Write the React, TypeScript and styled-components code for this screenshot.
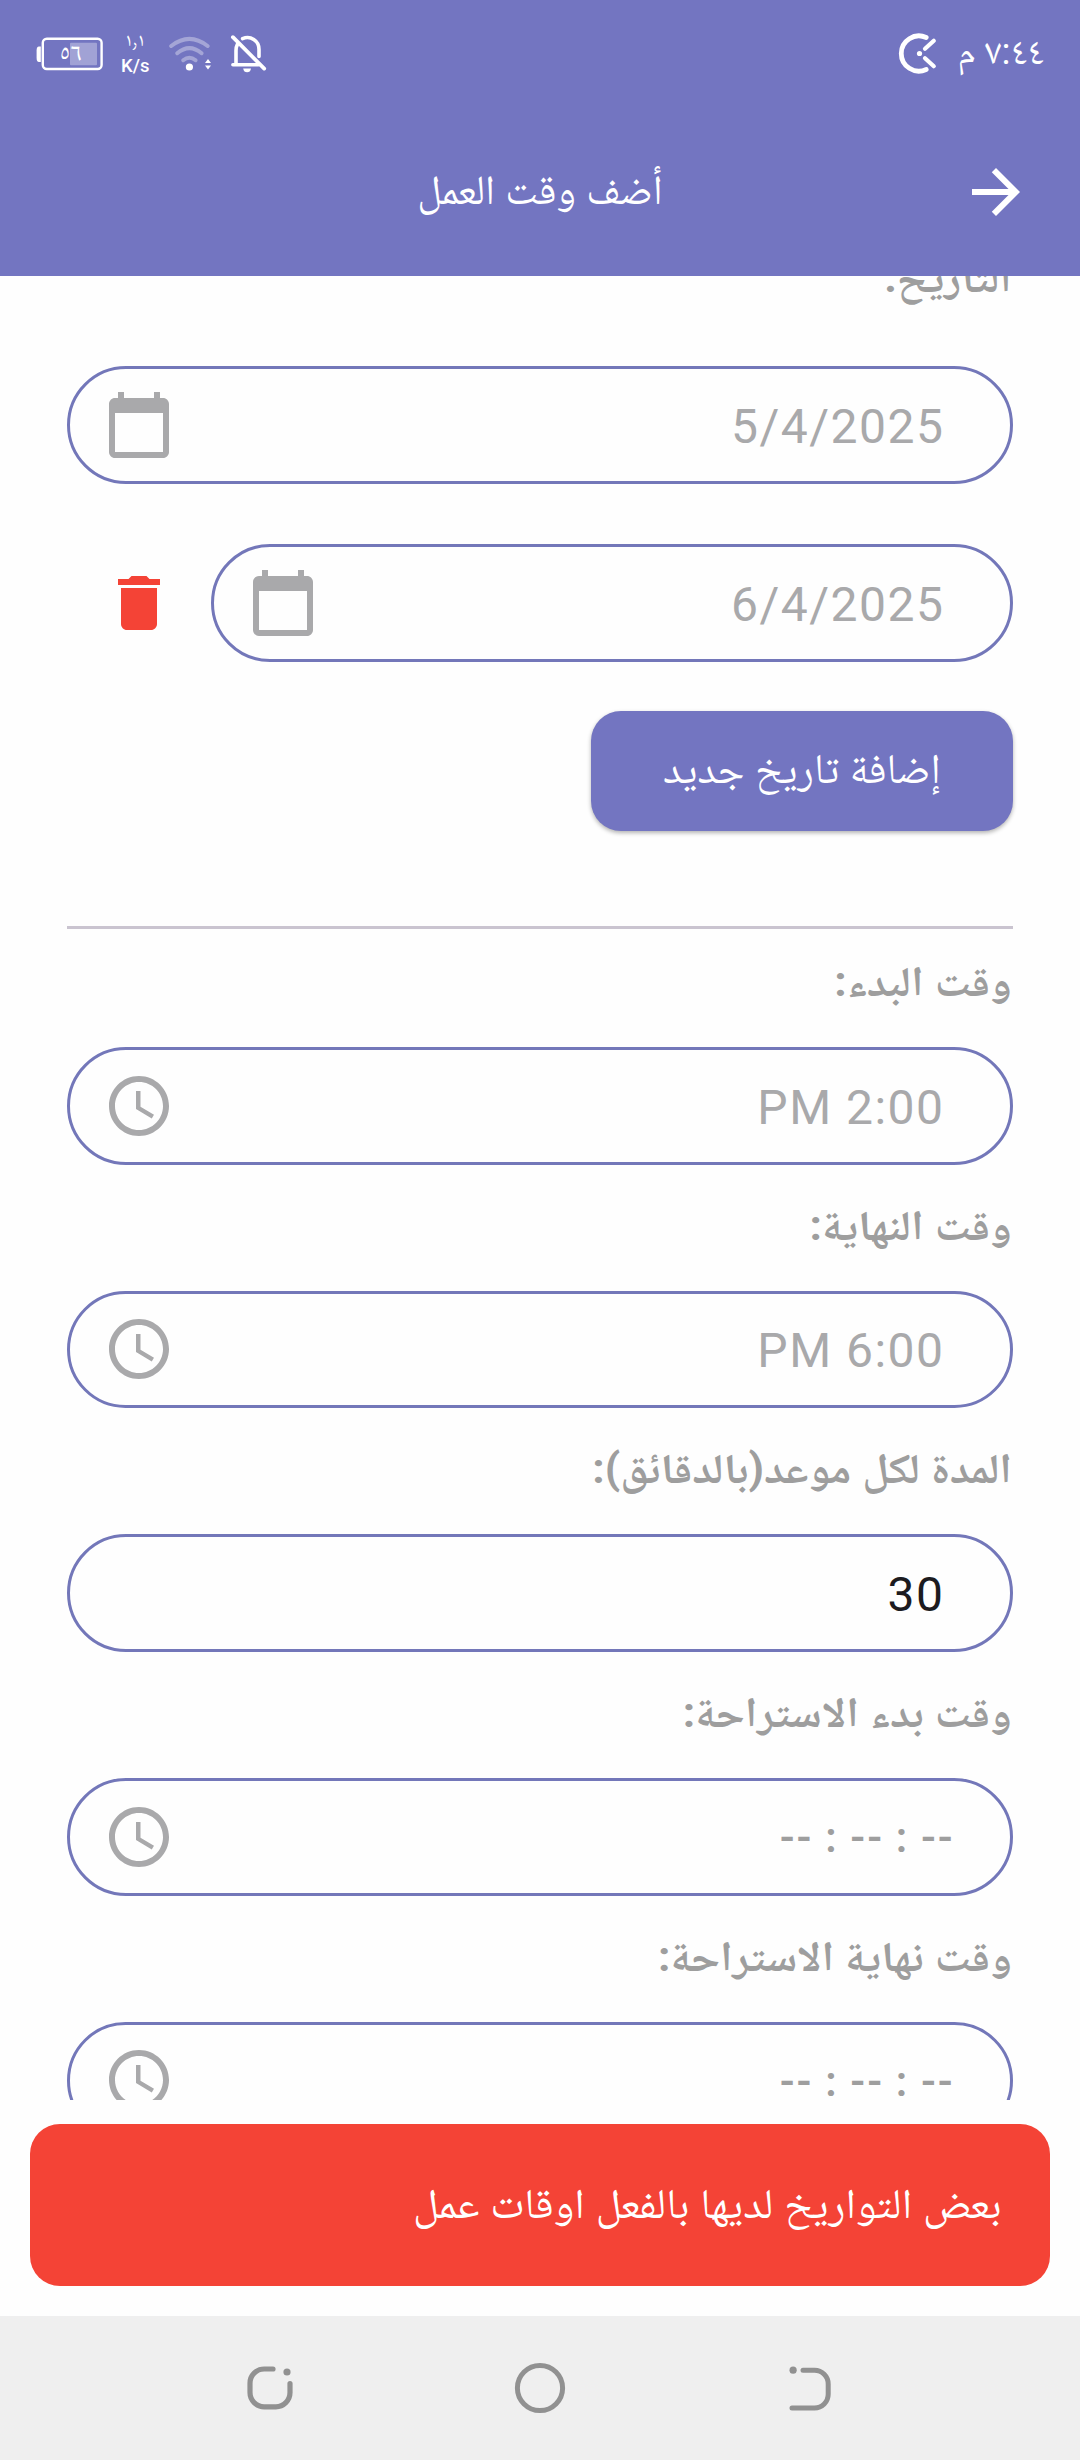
import React from "react";
import styled, { createGlobalStyle } from "styled-components";

const color = {
  primary: "#7375c1",
  outline: "#7377b9",
  danger: "#f44336",
  surface: "#fefefe",
  divider: "#cac4d0",
  label: "#9e9e9e",
  hint: "#a9a9ab",
  ink: "#1c1b1f",
  nav: "#efefef",
  navIcon: "#919191",
};

const fontStack = 'Roboto, "Noto Naskh Arabic", "Noto Naskh Arabic UI", sans-serif';

const GlobalStyle = createGlobalStyle`
  *, *::before, *::after { box-sizing: border-box; }
  body { margin: 0; background: ${color.surface}; }
  svg { display: block; flex: none; }
`;

const Screen = styled.div`
  display: flex;
  flex-direction: column;
  width: 1080px;
  height: 2460px;
  overflow: hidden;
  direction: rtl;
  background: ${color.surface};
  font-family: ${fontStack};
`;

/* ---------- Header ---------- */

const Header = styled.header`
  flex: none;
  height: 276px;
  background: ${color.primary};
  color: #fff;
`;

const StatusBar = styled.div`
  display: flex;
  align-items: center;
  justify-content: space-between;
  height: 108px;
  padding: 0 36px;
`;

const StatusGroup = styled.div<{ $gap: number }>`
  display: flex;
  align-items: center;
  gap: ${(p) => p.$gap}px;
`;

const Time = styled.span`
  padding-bottom: 6px;
  font-size: 37.2px;
  line-height: 60px;
  white-space: nowrap;
`;

const NetSpeed = styled.div`
  display: flex;
  flex-direction: column;
  align-items: center;
  width: 30px;
  margin-left: -1.5px;
  font-size: 18.5px;
  font-weight: 500;
  line-height: 24px;
  direction: ltr;
`;

const SpeedValue = styled.span`
  margin-bottom: 3px;
  font-weight: 400;
  line-height: 21px;
`;

const AppBar = styled.div`
  display: grid;
  grid-template-columns: 1fr auto 1fr;
  align-items: center;
  height: 168px;
  padding: 0 48px;
`;

const Title = styled.h1`
  margin: 0;
  padding-bottom: 4px;
  font-size: 41.5px;
  font-weight: 400;
  line-height: 80px;
`;

/* ---------- Form ---------- */

const ScrollArea = styled.main`
  flex: none;
  height: 1824px;
  overflow: hidden;
`;

const Form = styled.div`
  display: flex;
  flex-direction: column;
  margin-top: -60px;
  padding: 0 67px;
`;

const Label = styled.label<{ $height?: number; $line?: number }>`
  flex: none;
  height: ${(p) => p.$height ?? 126}px;
  padding-right: 1px;
  color: ${color.label};
  font-size: 42px;
  font-weight: 660;
  line-height: ${(p) => p.$line ?? 121}px;
  transform: scaleX(1.057);
  transform-origin: right;
  white-space: nowrap;
`;

const DateRow = styled.div<{ $spaced?: boolean }>`
  display: flex;
  flex: none;
  align-items: center;
  gap: 36px;
  margin-top: ${(p) => (p.$spaced ? 60.67 : 0)}px;
`;

const Field = styled.div`
  display: flex;
  flex: 1 0 auto;
  align-items: center;
  justify-content: space-between;
  height: 117.67px;
  padding: 0 65.5px 0 33px;
  border: 3px solid ${color.outline};
  border-radius: 59px;
`;

const FieldValue = styled.span<{ $tone?: "hint" | "ink" }>`
  padding-top: 4px;
  color: ${(p) => (p.$tone === "ink" ? color.ink : color.hint)};
  direction: ltr;
  font-size: 48px;
  letter-spacing: 1.5px;
  line-height: 72px;
`;

const Placeholder = styled.span`
  margin-right: -10px;
  padding-top: 3px;
  color: ${color.label};
  direction: ltr;
  font-size: 42px;
  font-weight: 600;
  letter-spacing: 1.5px;
  line-height: 72px;
`;

const DeleteButton = styled.button`
  flex: none;
  margin: 0 0 0 36px;
  padding: 0;
  border: 0;
  background: none;
`;

const AddButton = styled.button`
  flex: none;
  align-self: flex-start;
  width: 422.5px;
  height: 120.67px;
  margin: 48.67px 0 94.33px;
  padding: 0 0 3px;
  border: 0;
  border-radius: 30px;
  background: ${color.primary};
  box-shadow: 0 2px 4px rgba(0, 0, 0, 0.3);
  color: #fff;
  font-family: inherit;
  font-size: 42.3px;
  line-height: 80px;
`;

const Divider = styled.hr`
  flex: none;
  width: 100%;
  height: 3px;
  margin: 0;
  border: 0;
  background: ${color.divider};
`;

/* ---------- Snackbar and navigation ---------- */

const SnackbarHost = styled.div`
  flex: none;
  height: 216px;
  padding: 24px 30px 30px;
`;

const Snackbar = styled.div`
  display: flex;
  align-items: center;
  height: 162px;
  padding: 0 48px 3px;
  border-radius: 30px;
  background: ${color.danger};
  color: #fff;
  font-size: 42px;
  line-height: 80px;
`;

const Message = styled.span`
  transform: scaleX(1.046);
  transform-origin: right;
`;

const NavBar = styled.nav`
  display: grid;
  flex: none;
  grid-template-columns: repeat(3, 1fr);
  place-items: center;
  height: 144px;
  padding: 0 135px;
  background: ${color.nav};
`;

/* ---------- Icons ---------- */

const MaterialIcon = ({ d, fill }: { d: string; fill: string }) => (
  <svg width="72" height="72" viewBox="0 0 24 24" fill={fill}>
    <path d={d} />
  </svg>
);

const CalendarIcon = () => (
  <MaterialIcon
    fill={color.hint}
    d="M20 3h-1V1h-2v2H7V1H5v2H4c-1.1 0-2 .9-2 2v16c0 1.1.9 2 2 2h16c1.1 0 2-.9 2-2V5c0-1.1-.9-2-2-2zm0 18H4V8h16v13z"
  />
);

const ClockIcon = () => (
  <MaterialIcon
    fill={color.hint}
    d="M11.99 2C6.47 2 2 6.48 2 12s4.47 10 9.99 10C17.52 22 22 17.52 22 12S17.52 2 11.99 2zM12 20c-4.42 0-8-3.58-8-8s3.58-8 8-8 8 3.58 8 8-3.58 8-8 8zm.5-13H11v6l5.25 3.15.75-1.23-4.5-2.67z"
  />
);

const TrashIcon = () => (
  <MaterialIcon
    fill={color.danger}
    d="M6 19c0 1.1.9 2 2 2h8c1.1 0 2-.9 2-2V7H6v12zM19 4h-3.5l-1-1h-5l-1 1H5v2h14V4z"
  />
);

const ArrowIcon = () => (
  <MaterialIcon fill="#fff" d="M12 4l-1.41 1.41L16.17 11H4v2h12.17l-5.58 5.59L12 20l8-8z" />
);

const TrackerIcon = () => (
  <svg width="40" height="45" viewBox="0 0 40 45" fill="none" stroke="#fff" strokeLinecap="round">
    <path d="M28.2 5.5A17.6 17.6 0 1 0 28.2 37.5" strokeWidth="4.8" />
    <path d="M35.8 8.8L27 16.8M35.8 34.2L27 26.2" strokeWidth="4.2" />
    <circle cx="21.5" cy="21.5" r="2.6" fill="#fff" stroke="none" />
  </svg>
);

const BellOffIcon = () => (
  <svg width="37" height="40" viewBox="0 0 37 40" fill="none" stroke="#fff" strokeLinecap="round">
    <path d="M2.9 3.2L34.2 34.6" strokeWidth="3.8" />
    <path d="M12.6 4.6C20.5 1.4 29 6.4 29 15.5V22.5" strokeWidth="3.6" />
    <path d="M7.4 10.4C6.4 12.4 6 14 6 16.4V30.7M2.9 30.7H28.5" strokeWidth="3.6" />
    <path d="M13.2 34.4H21C20.6 37 19.2 38.2 17.1 38.2S13.6 37 13.2 34.4Z" fill="#fff" stroke="none" />
  </svg>
);

const WifiIcon = () => (
  <svg width="44" height="40" viewBox="0 0 44 40" fill="none" stroke="#fff" strokeLinecap="round">
    <g strokeOpacity="0.35" strokeWidth="4">
      <path d="M3.2 12Q21.4 -2.2 39.6 12" />
      <path d="M9.2 19.2Q21.4 9 33.6 19.2" />
      <path d="M15.2 26.2Q21.4 21.2 27.6 26.2" />
    </g>
    <circle cx="21.4" cy="33" r="3.6" fill="#fff" stroke="none" />
    <path d="M40 25L43 29H37ZM40 35.6L43 31.6H37Z" fill="#fff" stroke="none" />
  </svg>
);

const BatteryDigits = styled.text`
  font-family: ${fontStack};
  font-size: 25px;
`;

const BatteryIcon = ({ level }: { level: string }) => (
  <svg width="68" height="36" viewBox="0 0 68 36">
    <path d="M4.8 10.6V26H3Q0.6 26 0.6 22V14.6Q0.6 10.6 3 10.6Z" fill="#fff" />
    <rect x="6.8" y="2.8" width="58.8" height="30.2" rx="4" fill="none" stroke="#fff" strokeWidth="2.4" />
    <rect x="34" y="6.8" width="27" height="22.4" rx="1" fill="#fff" fillOpacity="0.33" />
    <BatteryDigits x="34.4" y="25.4" fill="#fff" textAnchor="middle">
      {level}
    </BatteryDigits>
  </svg>
);

const BackIcon = () => (
  <svg width="48" height="48" viewBox="0 0 48 48" fill="none" stroke={color.navIcon} strokeWidth="5" strokeLinecap="round">
    <path d="M17 6.2H28.5A13.7 13.7 0 0 1 42.2 19.9V30.3A13.7 13.7 0 0 1 28.5 44H6" />
    <circle cx="7.1" cy="6.2" r="3.6" fill={color.navIcon} stroke="none" />
  </svg>
);

const HomeIcon = () => (
  <svg width="54" height="54" viewBox="0 0 54 54" fill="none" stroke={color.navIcon} strokeWidth="5">
    <circle cx="27" cy="27" r="22.6" />
  </svg>
);

const RecentsIcon = () => (
  <svg width="48" height="48" viewBox="0 0 48 48" fill="none" stroke={color.navIcon} strokeWidth="5.2" strokeLinecap="round">
    <path d="M27 5H18.2A14.2 14.2 0 0 0 4 19.2V28.6A14.2 14.2 0 0 0 18.2 42.8H29.8A14.2 14.2 0 0 0 44 28.6V19.6" />
    <circle cx="41" cy="8" r="3.6" fill={color.navIcon} stroke="none" />
  </svg>
);

/* ---------- Screen ---------- */

export default function App() {
  return (
    <Screen lang="ar">
      <GlobalStyle />
      <Header>
        <StatusBar>
          <StatusGroup $gap={19}>
            <Time>٧:٤٤ م</Time>
            <TrackerIcon />
          </StatusGroup>
          <StatusGroup $gap={17.7}>
            <BellOffIcon />
            <WifiIcon />
            <NetSpeed>
              <SpeedValue>١٫١</SpeedValue>
              <span>K/s</span>
            </NetSpeed>
            <BatteryIcon level="٥٦" />
          </StatusGroup>
        </StatusBar>
        <AppBar>
          <ArrowIcon />
          <Title>أضف وقت العمل</Title>
        </AppBar>
      </Header>

      <ScrollArea>
        <Form>
          <Label $height={150} $line={123}>التاريخ:</Label>
          <DateRow>
            <Field>
              <FieldValue>5/4/2025</FieldValue>
              <CalendarIcon />
            </Field>
          </DateRow>
          <DateRow $spaced>
            <Field>
              <FieldValue>6/4/2025</FieldValue>
              <CalendarIcon />
            </Field>
            <DeleteButton>
              <TrashIcon />
            </DeleteButton>
          </DateRow>
          <AddButton>إضافة تاريخ جديد</AddButton>
          <Divider />

          <Label $height={118.33} $line={105}>وقت البدء:</Label>
          <Field>
            <FieldValue>PM 2:00</FieldValue>
            <ClockIcon />
          </Field>

          <Label>وقت النهاية:</Label>
          <Field>
            <FieldValue>PM 6:00</FieldValue>
            <ClockIcon />
          </Field>

          <Label>المدة لكل موعد(بالدقائق):</Label>
          <Field>
            <FieldValue $tone="ink">30</FieldValue>
          </Field>

          <Label>وقت بدء الاستراحة:</Label>
          <Field>
            <Placeholder>-- : -- : --</Placeholder>
            <ClockIcon />
          </Field>

          <Label>وقت نهاية الاستراحة:</Label>
          <Field>
            <Placeholder>-- : -- : --</Placeholder>
            <ClockIcon />
          </Field>
        </Form>
      </ScrollArea>

      <SnackbarHost>
        <Snackbar>
          <Message>بعض التواريخ لديها بالفعل اوقات عمل</Message>
        </Snackbar>
      </SnackbarHost>

      <NavBar>
        <BackIcon />
        <HomeIcon />
        <RecentsIcon />
      </NavBar>
    </Screen>
  );
}
